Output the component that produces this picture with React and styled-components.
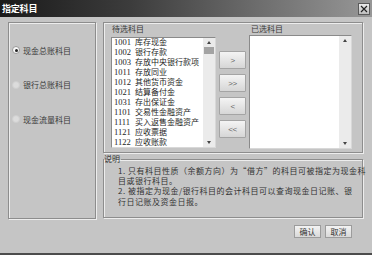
import React from 'react';
import styled, { createGlobalStyle } from 'styled-components';

const Global = createGlobalStyle`
  html, body { margin: 0; padding: 0; background: #c4c4c4; }
  body { font-family: "Noto Sans CJK SC", "Liberation Sans", sans-serif; }
  #root { width: 372px; height: 255px; }
`;

const Window = styled.div`
  width: 372px;
  height: 255px;
  box-sizing: border-box;
  background: #c5c5c5;
  display: flex;
  flex-direction: column;
  border-bottom: 2px solid #4c4c4c;
  overflow: hidden;
`;

const TitleBar = styled.div`
  height: 17px;
  flex: none;
  box-sizing: border-box;
  display: flex;
  align-items: center;
  justify-content: space-between;
  padding: 0 2px 0 2px;
  background: linear-gradient(to right, #1a1a1a 0%, #3c3c3c 35%, #6e6e6e 70%, #979797 100%);
`;

const Title = styled.span`
  color: #fff;
  font-size: 9px;
  font-weight: bold;
  line-height: 17px;
  letter-spacing: -0.2px;
`;

const CloseBtn = styled.div`
  width: 12px;
  height: 12px;
  box-sizing: border-box;
  border: 1px solid #5a5a5a;
  background: linear-gradient(#ececec, #bdbdbd);
  display: flex;
  align-items: center;
  justify-content: center;
`;

const Body = styled.div`
  flex: 1;
  display: flex;
  gap: 7px;
  padding: 5px 0 0 8px;
`;

const Etched = styled.div`
  box-sizing: border-box;
  border: 1px solid #8d8d8d;
  box-shadow: inset 1px 1px 0 #ededed, 1px 1px 0 #ededed;
`;

const LeftGroup = styled(Etched)`
  width: 88px;
  height: 197px;
  display: flex;
  flex-direction: column;
  gap: 24.5px;
  padding: 22px 0 0 3px;
`;

const RadioRow = styled.label`
  display: flex;
  align-items: center;
  gap: 3px;
  height: 10px;
  font-size: 8px;
  color: #3a3a3a;
`;

const RadioDot = styled.span`
  width: 8px;
  height: 8px;
  box-sizing: border-box;
  border-radius: 50%;
  background: ${p => (p.$on ? '#fafafa' : '#dcdcdc')};
  border: 1px solid ${p => (p.$on ? '#9a9a9a' : '#cfcfcf')};
  display: flex;
  align-items: center;
  justify-content: center;
  &::after {
    content: '';
    display: ${p => (p.$on ? 'block' : 'none')};
    width: 3px;
    height: 3px;
    border-radius: 50%;
    background: #222;
  }
`;

const RightCol = styled.div`
  width: 260px;
  display: flex;
  flex-direction: column;
`;

const ListFrame = styled(Etched)`
  height: 131px;
  display: flex;
  padding: 0 0 0 7px;
  gap: 3px;
`;

const Pane = styled.div`
  display: flex;
  flex-direction: column;
`;

const PaneLabel = styled.div`
  font-size: 8px;
  line-height: 11px;
  height: 11px;
  color: #3a3a3a;
  padding-left: ${p => p.$indent}px;
`;

const ListBox = styled.div`
  width: ${p => p.$w}px;
  height: ${p => p.$h}px;
  margin-top: ${p => p.$mt}px;
  box-sizing: border-box;
  border: 1px solid #8a8a8a;
  border-right-color: #d8d8d8;
  border-bottom-color: #d8d8d8;
  background: #fff;
  display: flex;
  overflow: hidden;
`;

const Items = styled.div`
  flex: 1;
  padding: 0 0 0 2px;
  margin-top: -1px;
`;

const Item = styled.div`
  font-size: 8px;
  line-height: 10px;
  height: 10px;
  color: #1e1e1e;
  white-space: nowrap;
  display: flex;
`;

const Code = styled.span`
  width: 21px;
  flex: none;
  font-family: "Liberation Serif", serif;
  font-size: 8.5px;
`;

const ScrollBar = styled.div`
  width: 12px;
  flex: none;
  background: #ebebeb;
  display: flex;
  flex-direction: column;
  align-items: center;
  justify-content: space-between;
  padding: 3px 0 3px;
  box-sizing: border-box;
`;

const ScrollTop = styled.div`
  display: flex;
  flex-direction: column;
  align-items: center;
  gap: 3px;
`;

const Thumb = styled.div`
  width: 10px;
  height: 7px;
  background: #a3a3a3;
`;

const Arrow = styled.div`
  width: 0;
  height: 0;
  border-left: 2.5px solid transparent;
  border-right: 2.5px solid transparent;
  ${p => (p.$down ? 'border-top: 3px solid #444;' : 'border-bottom: 3px solid #444;')}
`;

const BtnCol = styled.div`
  display: flex;
  flex-direction: column;
  gap: 5px;
  padding-top: 28px;
`;

const MoveBtn = styled.div`
  width: 27px;
  height: 18px;
  box-sizing: border-box;
  border: 1px solid #a4a4a4;
  border-radius: 1px;
  background: linear-gradient(#f4f4f4, #d6d6d6);
  color: #666;
  font-family: "Liberation Sans", sans-serif;
  font-size: 8px;
  display: flex;
  align-items: center;
  justify-content: center;
  letter-spacing: -0.5px;
`;

const Note = styled.fieldset`
  margin: 1px 0 0 0;
  padding: 2px 0 0 0;
  height: 64px;
  box-sizing: border-box;
  border: 1px solid #8d8d8d;
  box-shadow: inset 1px 1px 0 #ededed, 1px 1px 0 #ededed;
  min-width: 0;
`;

const NoteLegend = styled.legend`
  padding: 0 1px 0 0;
  margin-left: 0;
  font-size: 8px;
  line-height: 10px;
  color: #333;
`;

const NoteText = styled.p`
  margin: 0;
  padding-left: 14px;
  font-size: 8px;
  letter-spacing: 0.5px;
  line-height: 10.2px;
  color: #333;
  white-space: nowrap;
`;

const Footer = styled.div`
  display: flex;
  justify-content: flex-end;
  gap: 4px;
  padding: 7px 11px 0 0;
`;

const DlgBtn = styled.div`
  width: 27px;
  height: 13px;
  box-sizing: border-box;
  border: 1px solid #9c9c9c;
  background: linear-gradient(#f3f3f3, #d9d9d9);
  font-size: 8px;
  color: #333;
  display: flex;
  align-items: center;
  justify-content: center;
`;

const items = [
  ['1001', '库存现金'],
  ['1002', '银行存款'],
  ['1003', '存放中央银行款项'],
  ['1011', '存放同业'],
  ['1012', '其他货币资金'],
  ['1021', '结算备付金'],
  ['1031', '存出保证金'],
  ['1101', '交易性金融资产'],
  ['1111', '买入返售金融资产'],
  ['1121', '应收票据'],
  ['1122', '应收账款'],
];

export default function App() {
  return (
    <>
      <Global />
      <Window>
        <TitleBar>
          <Title>指定科目</Title>
          <CloseBtn>
            <svg width="8" height="8" viewBox="0 0 8 8">
              <path d="M1 1 L7 7 M7 1 L1 7" stroke="#222" strokeWidth="1.2" />
            </svg>
          </CloseBtn>
        </TitleBar>
        <Body>
          <LeftGroup>
            <RadioRow><RadioDot $on />现金总账科目</RadioRow>
            <RadioRow><RadioDot />银行总账科目</RadioRow>
            <RadioRow><RadioDot />现金流量科目</RadioRow>
          </LeftGroup>
          <RightCol>
            <ListFrame>
              <Pane>
                <PaneLabel $indent={1}>待选科目</PaneLabel>
                <ListBox $w={105} $h={111} $mt={3}>
                  <Items>
                    {items.map(([c, n]) => (
                      <Item key={c}><Code>{c}</Code>{n}</Item>
                    ))}
                  </Items>
                  <ScrollBar>
                    <ScrollTop>
                      <Arrow />
                      <Thumb />
                    </ScrollTop>
                    <Arrow $down />
                  </ScrollBar>
                </ListBox>
              </Pane>
              <BtnCol>
                <MoveBtn>&gt;</MoveBtn>
                <MoveBtn>&gt;&gt;</MoveBtn>
                <MoveBtn>&lt;</MoveBtn>
                <MoveBtn>&lt;&lt;</MoveBtn>
              </BtnCol>
              <Pane>
                <PaneLabel $indent={2}>已选科目</PaneLabel>
                <ListBox $w={103} $h={114} $mt={1}>
                  <Items />
                  <ScrollBar>
                    <Arrow />
                    <Arrow $down />
                  </ScrollBar>
                </ListBox>
              </Pane>
            </ListFrame>
            <Note>
              <NoteLegend>说明</NoteLegend>
              <NoteText>
                1. 只有科目性质（余额方向）为“借方”的科目可被指定为现金科<br />
                目或银行科目。<br />
                2. 被指定为现金/银行科目的会计科目可以查询现金日记账、银<br />
                行日记账及资金日报。
              </NoteText>
            </Note>
            <Footer>
              <DlgBtn>确认</DlgBtn>
              <DlgBtn>取消</DlgBtn>
            </Footer>
          </RightCol>
        </Body>
      </Window>
    </>
  );
}
